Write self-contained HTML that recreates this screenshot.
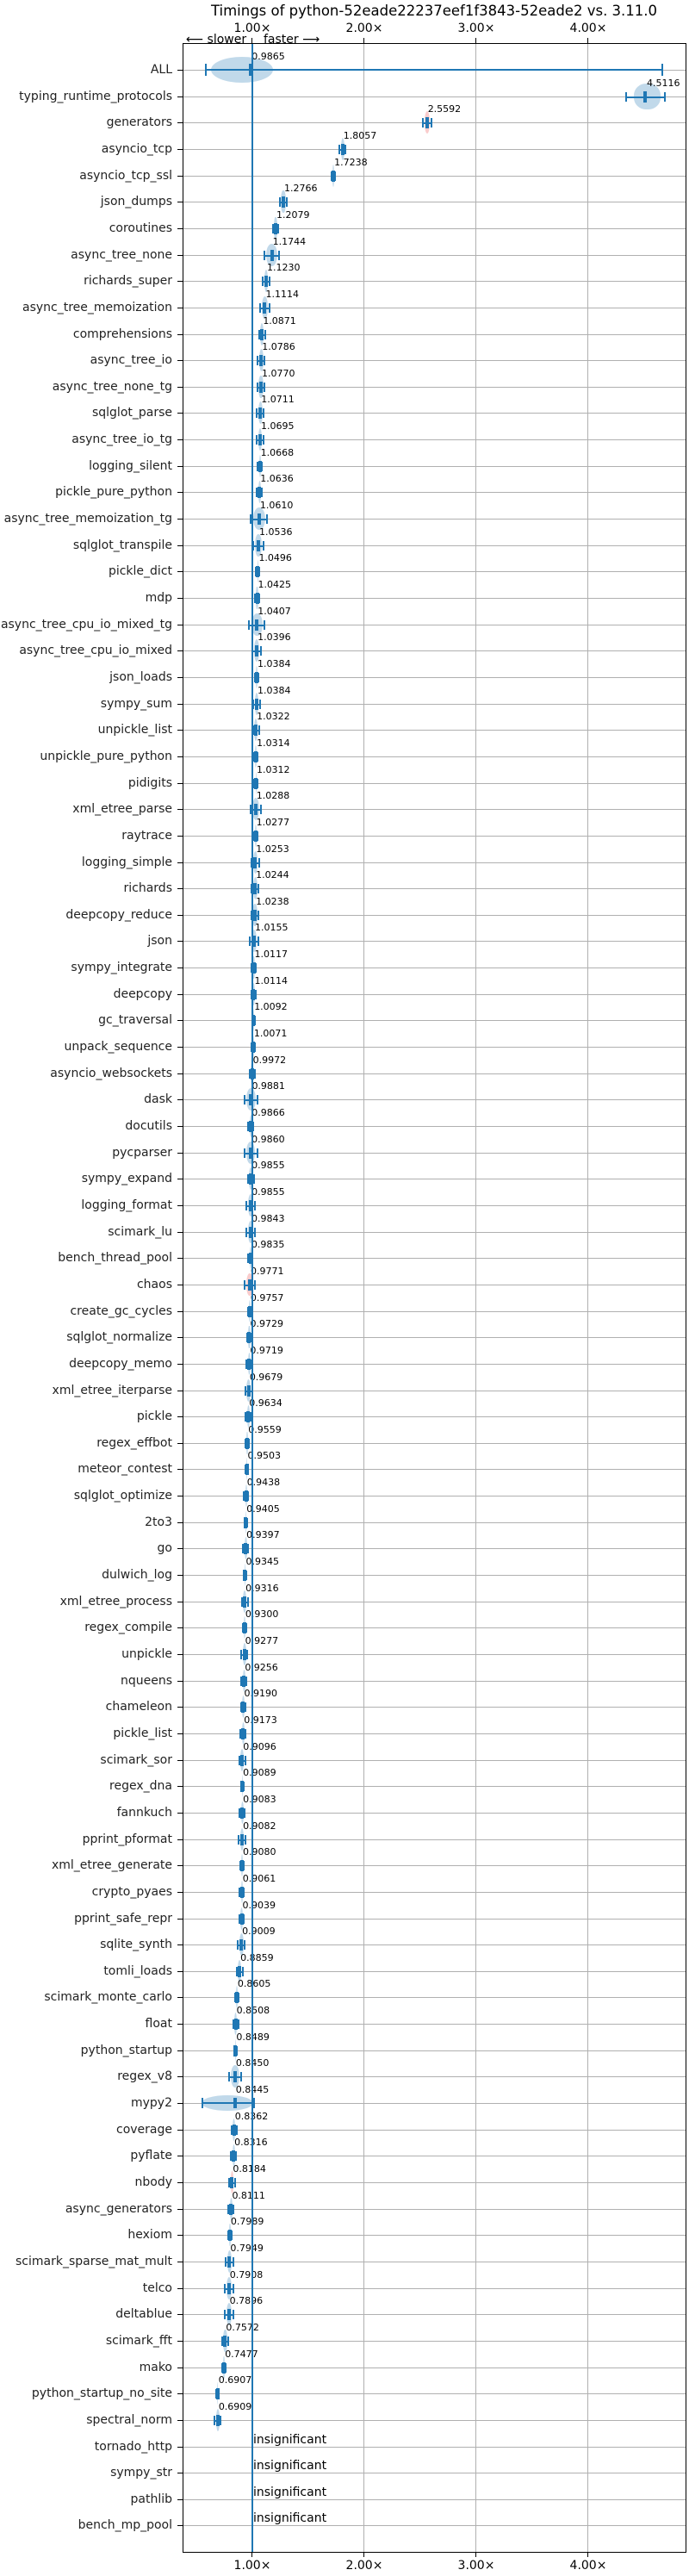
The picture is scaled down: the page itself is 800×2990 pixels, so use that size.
<!DOCTYPE html>
<html><head><meta charset="utf-8"><style>
body{margin:0;background:#fff;width:800px;height:2990px;position:relative;overflow:hidden;font-family:"DejaVu Sans","Liberation Sans",sans-serif;color:#000}
.abs{position:absolute}
.box{left:212px;top:50px;width:583px;height:2911px;border:1px solid #000}
.vg{position:absolute;top:51px;height:2911px;width:1px;background:#b0b0b0}
.one{position:absolute;top:51px;height:2911px;width:2px;left:292px;background:#1f77b4}
.r{position:absolute;left:0;width:800px;height:0;top:calc(81px + 30.65px * var(--i))}
.gl{position:absolute;left:213px;width:583px;height:1px;top:0;background:#b0b0b0}
.tk{position:absolute;left:206px;width:6px;height:1px;top:0;background:#000}
.lb{position:absolute;right:600px;top:-8px;font-size:14px;line-height:16px;white-space:nowrap;color:#222}
.vi{position:absolute;height:26px;top:-13px;border-radius:50%;background:rgba(31,119,180,.28);
 left:calc(163px + 130px * (var(--v) - var(--w) * 0.4));width:calc(104px * var(--w))}
.vi.p{background:rgba(240,110,110,.35)}
.m{position:absolute;height:11px;top:-5px;border-left:2px solid #1f77b4;border-right:2px solid #1f77b4;
 left:calc(163px + 130px * (var(--v) - var(--w) / 2) - 2px);width:calc(130px * var(--w))}
.m::before{content:"";position:absolute;left:0;right:0;top:5px;height:2px;background:#1f77b4}
.m::after{content:"";position:absolute;left:calc(50% - 2px);width:4px;top:-1px;height:13px;background:#1f77b4}
.a{position:absolute;top:-21px;font-size:11px;line-height:12px;left:calc(164px + 130px * var(--v));white-space:nowrap}
.ins{position:absolute;left:294px;top:-16px;font-size:14px;line-height:16px}
.tl{position:absolute;font-size:14px;line-height:16px;width:60px;text-align:center}
</style></head><body>
<div class="abs" style="left:212px;width:584px;top:3px;text-align:center;font-size:16.5px;white-space:nowrap">Timings of python-52eade22237eef1f3843-52eade2 vs. 3.11.0</div>
<div class="tl" style="left:263px;top:25px">1.00×</div>
<div class="tl" style="left:393px;top:25px">2.00×</div>
<div class="tl" style="left:523px;top:25px">3.00×</div>
<div class="tl" style="left:653px;top:25px">4.00×</div>
<div class="abs" style="left:216px;top:38px;font-size:14px;line-height:16px;white-space:nowrap">⟵ slower</div>
<div class="abs" style="left:306px;top:38px;font-size:14px;line-height:16px;white-space:nowrap">faster ⟶</div>
<div class="abs" style="left:292px;top:44px;width:1px;height:6px;background:#000"></div>
<div class="abs" style="left:422px;top:44px;width:1px;height:6px;background:#000"></div>
<div class="abs" style="left:552px;top:44px;width:1px;height:6px;background:#000"></div>
<div class="abs" style="left:682px;top:44px;width:1px;height:6px;background:#000"></div>
<div class="abs" style="left:292px;top:2962px;width:1px;height:6px;background:#000"></div>
<div class="abs" style="left:422px;top:2962px;width:1px;height:6px;background:#000"></div>
<div class="abs" style="left:552px;top:2962px;width:1px;height:6px;background:#000"></div>
<div class="abs" style="left:682px;top:2962px;width:1px;height:6px;background:#000"></div>
<div class="tl" style="left:263px;top:2970px">1.00×</div>
<div class="tl" style="left:393px;top:2970px">2.00×</div>
<div class="tl" style="left:523px;top:2970px">3.00×</div>
<div class="tl" style="left:653px;top:2970px">4.00×</div>
<div class="vg" style="left:422px"></div><div class="vg" style="left:552px"></div><div class="vg" style="left:682px"></div>

<div class="r" style="--i:0"><div class="gl"></div><div class="tk"></div><div class="lb">ALL</div>
<div class="abs" style="left:245px;width:72px;top:-15px;height:30px;border-radius:50%;background:rgba(31,119,180,.28)"></div>
<div class="abs" style="left:238px;width:531px;top:-1px;height:2px;background:#1f77b4"></div>
<div class="abs" style="left:238px;width:2px;top:-7px;height:14px;background:#1f77b4"></div>
<div class="abs" style="left:768px;width:2px;top:-7px;height:14px;background:#1f77b4"></div>
<div class="abs" style="left:289px;width:4px;top:-7px;height:14px;background:#1f77b4"></div>
<div class="a" style="--v:0.9865">0.9865</div></div>
<div class="r" style="--i:1;--v:4.5116;--w:0.33"><div class="gl"></div><div class="tk"></div><div class="lb">typing_runtime_protocols</div>
<div class="abs" style="left:736px;width:31px;top:-15px;height:30px;border-radius:45%;background:rgba(31,119,180,.28)"></div>
<div class="m"></div><div class="a" style="left:751px">4.5116</div></div>
<div class="r" style="--i:2;--v:2.5592;--w:0.06"><div class="gl"></div><div class="tk"></div><div class="lb">generators</div><div class="vi p"></div><div class="m"></div><div class="a">2.5592</div></div>
<div class="r" style="--i:3;--v:1.8057;--w:0.04"><div class="gl"></div><div class="tk"></div><div class="lb">asyncio_tcp</div><div class="vi"></div><div class="m"></div><div class="a">1.8057</div></div>
<div class="r" style="--i:4;--v:1.7238;--w:0.02"><div class="gl"></div><div class="tk"></div><div class="lb">asyncio_tcp_ssl</div><div class="vi"></div><div class="m"></div><div class="a">1.7238</div></div>
<div class="r" style="--i:5;--v:1.2766;--w:0.05"><div class="gl"></div><div class="tk"></div><div class="lb">json_dumps</div><div class="vi"></div><div class="m"></div><div class="a">1.2766</div></div>
<div class="r" style="--i:6;--v:1.2079;--w:0.03"><div class="gl"></div><div class="tk"></div><div class="lb">coroutines</div><div class="vi"></div><div class="m"></div><div class="a">1.2079</div></div>
<div class="r" style="--i:7;--v:1.1744;--w:0.12"><div class="gl"></div><div class="tk"></div><div class="lb">async_tree_none</div><div class="vi"></div><div class="m"></div><div class="a">1.1744</div></div>
<div class="r" style="--i:8;--v:1.1230;--w:0.04"><div class="gl"></div><div class="tk"></div><div class="lb">richards_super</div><div class="vi"></div><div class="m"></div><div class="a">1.1230</div></div>
<div class="r" style="--i:9;--v:1.1114;--w:0.07"><div class="gl"></div><div class="tk"></div><div class="lb">async_tree_memoization</div><div class="vi"></div><div class="m"></div><div class="a">1.1114</div></div>
<div class="r" style="--i:10;--v:1.0871;--w:0.04"><div class="gl"></div><div class="tk"></div><div class="lb">comprehensions</div><div class="vi"></div><div class="m"></div><div class="a">1.0871</div></div>
<div class="r" style="--i:11;--v:1.0786;--w:0.05"><div class="gl"></div><div class="tk"></div><div class="lb">async_tree_io</div><div class="vi"></div><div class="m"></div><div class="a">1.0786</div></div>
<div class="r" style="--i:12;--v:1.0770;--w:0.05"><div class="gl"></div><div class="tk"></div><div class="lb">async_tree_none_tg</div><div class="vi"></div><div class="m"></div><div class="a">1.0770</div></div>
<div class="r" style="--i:13;--v:1.0711;--w:0.05"><div class="gl"></div><div class="tk"></div><div class="lb">sqlglot_parse</div><div class="vi"></div><div class="m"></div><div class="a">1.0711</div></div>
<div class="r" style="--i:14;--v:1.0695;--w:0.04"><div class="gl"></div><div class="tk"></div><div class="lb">async_tree_io_tg</div><div class="vi"></div><div class="m"></div><div class="a">1.0695</div></div>
<div class="r" style="--i:15;--v:1.0668;--w:0.02"><div class="gl"></div><div class="tk"></div><div class="lb">logging_silent</div><div class="vi"></div><div class="m"></div><div class="a">1.0668</div></div>
<div class="r" style="--i:16;--v:1.0636;--w:0.03"><div class="gl"></div><div class="tk"></div><div class="lb">pickle_pure_python</div><div class="vi"></div><div class="m"></div><div class="a">1.0636</div></div>
<div class="r" style="--i:17;--v:1.0610;--w:0.13"><div class="gl"></div><div class="tk"></div><div class="lb">async_tree_memoization_tg</div><div class="vi"></div><div class="m"></div><div class="a">1.0610</div></div>
<div class="r" style="--i:18;--v:1.0536;--w:0.07"><div class="gl"></div><div class="tk"></div><div class="lb">sqlglot_transpile</div><div class="vi"></div><div class="m"></div><div class="a">1.0536</div></div>
<div class="r" style="--i:19;--v:1.0496;--w:0.015"><div class="gl"></div><div class="tk"></div><div class="lb">pickle_dict</div><div class="vi"></div><div class="m"></div><div class="a">1.0496</div></div>
<div class="r" style="--i:20;--v:1.0425;--w:0.02"><div class="gl"></div><div class="tk"></div><div class="lb">mdp</div><div class="vi"></div><div class="m"></div><div class="a">1.0425</div></div>
<div class="r" style="--i:21;--v:1.0407;--w:0.12"><div class="gl"></div><div class="tk"></div><div class="lb">async_tree_cpu_io_mixed_tg</div><div class="vi"></div><div class="m"></div><div class="a">1.0407</div></div>
<div class="r" style="--i:22;--v:1.0396;--w:0.06"><div class="gl"></div><div class="tk"></div><div class="lb">async_tree_cpu_io_mixed</div><div class="vi"></div><div class="m"></div><div class="a">1.0396</div></div>
<div class="r" style="--i:23;--v:1.0384;--w:0.02"><div class="gl"></div><div class="tk"></div><div class="lb">json_loads</div><div class="vi"></div><div class="m"></div><div class="a">1.0384</div></div>
<div class="r" style="--i:24;--v:1.0384;--w:0.04"><div class="gl"></div><div class="tk"></div><div class="lb">sympy_sum</div><div class="vi"></div><div class="m"></div><div class="a">1.0384</div></div>
<div class="r" style="--i:25;--v:1.0322;--w:0.04"><div class="gl"></div><div class="tk"></div><div class="lb">unpickle_list</div><div class="vi"></div><div class="m"></div><div class="a">1.0322</div></div>
<div class="r" style="--i:26;--v:1.0314;--w:0.02"><div class="gl"></div><div class="tk"></div><div class="lb">unpickle_pure_python</div><div class="vi"></div><div class="m"></div><div class="a">1.0314</div></div>
<div class="r" style="--i:27;--v:1.0312;--w:0.01"><div class="gl"></div><div class="tk"></div><div class="lb">pidigits</div><div class="vi"></div><div class="m"></div><div class="a">1.0312</div></div>
<div class="r" style="--i:28;--v:1.0288;--w:0.08"><div class="gl"></div><div class="tk"></div><div class="lb">xml_etree_parse</div><div class="vi"></div><div class="m"></div><div class="a">1.0288</div></div>
<div class="r" style="--i:29;--v:1.0277;--w:0.02"><div class="gl"></div><div class="tk"></div><div class="lb">raytrace</div><div class="vi"></div><div class="m"></div><div class="a">1.0277</div></div>
<div class="r" style="--i:30;--v:1.0253;--w:0.05"><div class="gl"></div><div class="tk"></div><div class="lb">logging_simple</div><div class="vi"></div><div class="m"></div><div class="a">1.0253</div></div>
<div class="r" style="--i:31;--v:1.0244;--w:0.05"><div class="gl"></div><div class="tk"></div><div class="lb">richards</div><div class="vi"></div><div class="m"></div><div class="a">1.0244</div></div>
<div class="r" style="--i:32;--v:1.0238;--w:0.05"><div class="gl"></div><div class="tk"></div><div class="lb">deepcopy_reduce</div><div class="vi"></div><div class="m"></div><div class="a">1.0238</div></div>
<div class="r" style="--i:33;--v:1.0155;--w:0.06"><div class="gl"></div><div class="tk"></div><div class="lb">json</div><div class="vi"></div><div class="m"></div><div class="a">1.0155</div></div>
<div class="r" style="--i:34;--v:1.0117;--w:0.02"><div class="gl"></div><div class="tk"></div><div class="lb">sympy_integrate</div><div class="vi"></div><div class="m"></div><div class="a">1.0117</div></div>
<div class="r" style="--i:35;--v:1.0114;--w:0.03"><div class="gl"></div><div class="tk"></div><div class="lb">deepcopy</div><div class="vi"></div><div class="m"></div><div class="a">1.0114</div></div>
<div class="r" style="--i:36;--v:1.0092;--w:0.01"><div class="gl"></div><div class="tk"></div><div class="lb">gc_traversal</div><div class="vi"></div><div class="m"></div><div class="a">1.0092</div></div>
<div class="r" style="--i:37;--v:1.0071;--w:0.02"><div class="gl"></div><div class="tk"></div><div class="lb">unpack_sequence</div><div class="vi"></div><div class="m"></div><div class="a">1.0071</div></div>
<div class="r" style="--i:38;--v:0.9972;--w:0.03"><div class="gl"></div><div class="tk"></div><div class="lb">asyncio_websockets</div><div class="vi"></div><div class="m"></div><div class="a">0.9972</div></div>
<div class="r" style="--i:39;--v:0.9881;--w:0.1"><div class="gl"></div><div class="tk"></div><div class="lb">dask</div><div class="vi"></div><div class="m"></div><div class="a">0.9881</div></div>
<div class="r" style="--i:40;--v:0.9866;--w:0.03"><div class="gl"></div><div class="tk"></div><div class="lb">docutils</div><div class="vi"></div><div class="m"></div><div class="a">0.9866</div></div>
<div class="r" style="--i:41;--v:0.9860;--w:0.1"><div class="gl"></div><div class="tk"></div><div class="lb">pycparser</div><div class="vi"></div><div class="m"></div><div class="a">0.9860</div></div>
<div class="r" style="--i:42;--v:0.9855;--w:0.04"><div class="gl"></div><div class="tk"></div><div class="lb">sympy_expand</div><div class="vi"></div><div class="m"></div><div class="a">0.9855</div></div>
<div class="r" style="--i:43;--v:0.9855;--w:0.06"><div class="gl"></div><div class="tk"></div><div class="lb">logging_format</div><div class="vi"></div><div class="m"></div><div class="a">0.9855</div></div>
<div class="r" style="--i:44;--v:0.9843;--w:0.06"><div class="gl"></div><div class="tk"></div><div class="lb">scimark_lu</div><div class="vi"></div><div class="m"></div><div class="a">0.9843</div></div>
<div class="r" style="--i:45;--v:0.9835;--w:0.025"><div class="gl"></div><div class="tk"></div><div class="lb">bench_thread_pool</div><div class="vi"></div><div class="m"></div><div class="a">0.9835</div></div>
<div class="r" style="--i:46;--v:0.9771;--w:0.07"><div class="gl"></div><div class="tk"></div><div class="lb">chaos</div><div class="vi p"></div><div class="m"></div><div class="a">0.9771</div></div>
<div class="r" style="--i:47;--v:0.9757;--w:0.02"><div class="gl"></div><div class="tk"></div><div class="lb">create_gc_cycles</div><div class="vi"></div><div class="m"></div><div class="a">0.9757</div></div>
<div class="r" style="--i:48;--v:0.9729;--w:0.02"><div class="gl"></div><div class="tk"></div><div class="lb">sqlglot_normalize</div><div class="vi"></div><div class="m"></div><div class="a">0.9729</div></div>
<div class="r" style="--i:49;--v:0.9719;--w:0.03"><div class="gl"></div><div class="tk"></div><div class="lb">deepcopy_memo</div><div class="vi"></div><div class="m"></div><div class="a">0.9719</div></div>
<div class="r" style="--i:50;--v:0.9679;--w:0.05"><div class="gl"></div><div class="tk"></div><div class="lb">xml_etree_iterparse</div><div class="vi"></div><div class="m"></div><div class="a">0.9679</div></div>
<div class="r" style="--i:51;--v:0.9634;--w:0.03"><div class="gl"></div><div class="tk"></div><div class="lb">pickle</div><div class="vi"></div><div class="m"></div><div class="a">0.9634</div></div>
<div class="r" style="--i:52;--v:0.9559;--w:0.015"><div class="gl"></div><div class="tk"></div><div class="lb">regex_effbot</div><div class="vi"></div><div class="m"></div><div class="a">0.9559</div></div>
<div class="r" style="--i:53;--v:0.9503;--w:0.01"><div class="gl"></div><div class="tk"></div><div class="lb">meteor_contest</div><div class="vi"></div><div class="m"></div><div class="a">0.9503</div></div>
<div class="r" style="--i:54;--v:0.9438;--w:0.02"><div class="gl"></div><div class="tk"></div><div class="lb">sqlglot_optimize</div><div class="vi"></div><div class="m"></div><div class="a">0.9438</div></div>
<div class="r" style="--i:55;--v:0.9405;--w:0.01"><div class="gl"></div><div class="tk"></div><div class="lb">2to3</div><div class="vi"></div><div class="m"></div><div class="a">0.9405</div></div>
<div class="r" style="--i:56;--v:0.9397;--w:0.03"><div class="gl"></div><div class="tk"></div><div class="lb">go</div><div class="vi"></div><div class="m"></div><div class="a">0.9397</div></div>
<div class="r" style="--i:57;--v:0.9345;--w:0.015"><div class="gl"></div><div class="tk"></div><div class="lb">dulwich_log</div><div class="vi"></div><div class="m"></div><div class="a">0.9345</div></div>
<div class="r" style="--i:58;--v:0.9316;--w:0.04"><div class="gl"></div><div class="tk"></div><div class="lb">xml_etree_process</div><div class="vi"></div><div class="m"></div><div class="a">0.9316</div></div>
<div class="r" style="--i:59;--v:0.9300;--w:0.02"><div class="gl"></div><div class="tk"></div><div class="lb">regex_compile</div><div class="vi"></div><div class="m"></div><div class="a">0.9300</div></div>
<div class="r" style="--i:60;--v:0.9277;--w:0.04"><div class="gl"></div><div class="tk"></div><div class="lb">unpickle</div><div class="vi"></div><div class="m"></div><div class="a">0.9277</div></div>
<div class="r" style="--i:61;--v:0.9256;--w:0.03"><div class="gl"></div><div class="tk"></div><div class="lb">nqueens</div><div class="vi"></div><div class="m"></div><div class="a">0.9256</div></div>
<div class="r" style="--i:62;--v:0.9190;--w:0.03"><div class="gl"></div><div class="tk"></div><div class="lb">chameleon</div><div class="vi"></div><div class="m"></div><div class="a">0.9190</div></div>
<div class="r" style="--i:63;--v:0.9173;--w:0.03"><div class="gl"></div><div class="tk"></div><div class="lb">pickle_list</div><div class="vi"></div><div class="m"></div><div class="a">0.9173</div></div>
<div class="r" style="--i:64;--v:0.9096;--w:0.04"><div class="gl"></div><div class="tk"></div><div class="lb">scimark_sor</div><div class="vi"></div><div class="m"></div><div class="a">0.9096</div></div>
<div class="r" style="--i:65;--v:0.9089;--w:0.01"><div class="gl"></div><div class="tk"></div><div class="lb">regex_dna</div><div class="vi"></div><div class="m"></div><div class="a">0.9089</div></div>
<div class="r" style="--i:66;--v:0.9083;--w:0.03"><div class="gl"></div><div class="tk"></div><div class="lb">fannkuch</div><div class="vi"></div><div class="m"></div><div class="a">0.9083</div></div>
<div class="r" style="--i:67;--v:0.9082;--w:0.04"><div class="gl"></div><div class="tk"></div><div class="lb">pprint_pformat</div><div class="vi"></div><div class="m"></div><div class="a">0.9082</div></div>
<div class="r" style="--i:68;--v:0.9080;--w:0.02"><div class="gl"></div><div class="tk"></div><div class="lb">xml_etree_generate</div><div class="vi"></div><div class="m"></div><div class="a">0.9080</div></div>
<div class="r" style="--i:69;--v:0.9061;--w:0.02"><div class="gl"></div><div class="tk"></div><div class="lb">crypto_pyaes</div><div class="vi"></div><div class="m"></div><div class="a">0.9061</div></div>
<div class="r" style="--i:70;--v:0.9039;--w:0.03"><div class="gl"></div><div class="tk"></div><div class="lb">pprint_safe_repr</div><div class="vi"></div><div class="m"></div><div class="a">0.9039</div></div>
<div class="r" style="--i:71;--v:0.9009;--w:0.05"><div class="gl"></div><div class="tk"></div><div class="lb">sqlite_synth</div><div class="vi"></div><div class="m"></div><div class="a">0.9009</div></div>
<div class="r" style="--i:72;--v:0.8859;--w:0.04"><div class="gl"></div><div class="tk"></div><div class="lb">tomli_loads</div><div class="vi"></div><div class="m"></div><div class="a">0.8859</div></div>
<div class="r" style="--i:73;--v:0.8605;--w:0.02"><div class="gl"></div><div class="tk"></div><div class="lb">scimark_monte_carlo</div><div class="vi"></div><div class="m"></div><div class="a">0.8605</div></div>
<div class="r" style="--i:74;--v:0.8508;--w:0.03"><div class="gl"></div><div class="tk"></div><div class="lb">float</div><div class="vi"></div><div class="m"></div><div class="a">0.8508</div></div>
<div class="r" style="--i:75;--v:0.8489;--w:0.01"><div class="gl"></div><div class="tk"></div><div class="lb">python_startup</div><div class="vi"></div><div class="m"></div><div class="a">0.8489</div></div>
<div class="r" style="--i:76;--v:0.8450;--w:0.09"><div class="gl"></div><div class="tk"></div><div class="lb">regex_v8</div><div class="vi"></div><div class="m"></div><div class="a">0.8450</div></div>
<div class="r" style="--i:77"><div class="gl"></div><div class="tk"></div><div class="lb">mypy2</div>
<div class="abs" style="left:234px;width:60px;top:-9px;height:18px;border-radius:50%;background:rgba(31,119,180,.28)"></div>
<div class="abs" style="left:234px;width:60px;top:-1px;height:2px;background:#1f77b4"></div>
<div class="abs" style="left:234px;width:2px;top:-6px;height:12px;background:#1f77b4"></div>
<div class="abs" style="left:294px;width:2px;top:-6px;height:12px;background:#1f77b4"></div>
<div class="abs" style="left:271px;width:4px;top:-6px;height:12px;background:#1f77b4"></div>
<div class="a" style="--v:0.8445">0.8445</div></div>
<div class="r" style="--i:78;--v:0.8362;--w:0.03"><div class="gl"></div><div class="tk"></div><div class="lb">coverage</div><div class="vi"></div><div class="m"></div><div class="a">0.8362</div></div>
<div class="r" style="--i:79;--v:0.8316;--w:0.03"><div class="gl"></div><div class="tk"></div><div class="lb">pyflate</div><div class="vi"></div><div class="m"></div><div class="a">0.8316</div></div>
<div class="r" style="--i:80;--v:0.8184;--w:0.035"><div class="gl"></div><div class="tk"></div><div class="lb">nbody</div><div class="vi p"></div><div class="m"></div><div class="a">0.8184</div></div>
<div class="r" style="--i:81;--v:0.8111;--w:0.03"><div class="gl"></div><div class="tk"></div><div class="lb">async_generators</div><div class="vi"></div><div class="m"></div><div class="a">0.8111</div></div>
<div class="r" style="--i:82;--v:0.7989;--w:0.015"><div class="gl"></div><div class="tk"></div><div class="lb">hexiom</div><div class="vi"></div><div class="m"></div><div class="a">0.7989</div></div>
<div class="r" style="--i:83;--v:0.7949;--w:0.05"><div class="gl"></div><div class="tk"></div><div class="lb">scimark_sparse_mat_mult</div><div class="vi"></div><div class="m"></div><div class="a">0.7949</div></div>
<div class="r" style="--i:84;--v:0.7908;--w:0.06"><div class="gl"></div><div class="tk"></div><div class="lb">telco</div><div class="vi"></div><div class="m"></div><div class="a">0.7908</div></div>
<div class="r" style="--i:85;--v:0.7896;--w:0.06"><div class="gl"></div><div class="tk"></div><div class="lb">deltablue</div><div class="vi"></div><div class="m"></div><div class="a">0.7896</div></div>
<div class="r" style="--i:86;--v:0.7572;--w:0.04"><div class="gl"></div><div class="tk"></div><div class="lb">scimark_fft</div><div class="vi"></div><div class="m"></div><div class="a">0.7572</div></div>
<div class="r" style="--i:87;--v:0.7477;--w:0.015"><div class="gl"></div><div class="tk"></div><div class="lb">mako</div><div class="vi"></div><div class="m"></div><div class="a">0.7477</div></div>
<div class="r" style="--i:88;--v:0.6907;--w:0.01"><div class="gl"></div><div class="tk"></div><div class="lb">python_startup_no_site</div><div class="vi"></div><div class="m"></div><div class="a">0.6907</div></div>
<div class="r" style="--i:89;--v:0.6909;--w:0.04"><div class="gl"></div><div class="tk"></div><div class="lb">spectral_norm</div><div class="vi"></div><div class="m"></div><div class="a">0.6909</div></div>
<div class="r" style="--i:90"><div class="gl"></div><div class="tk"></div><div class="lb">tornado_http</div><div class="ins">insignificant</div></div>
<div class="r" style="--i:91"><div class="gl"></div><div class="tk"></div><div class="lb">sympy_str</div><div class="ins">insignificant</div></div>
<div class="r" style="--i:92"><div class="gl"></div><div class="tk"></div><div class="lb">pathlib</div><div class="ins">insignificant</div></div>
<div class="r" style="--i:93"><div class="gl"></div><div class="tk"></div><div class="lb">bench_mp_pool</div><div class="ins">insignificant</div></div>

<div class="one"></div>
<div class="abs box"></div>
</body></html>
